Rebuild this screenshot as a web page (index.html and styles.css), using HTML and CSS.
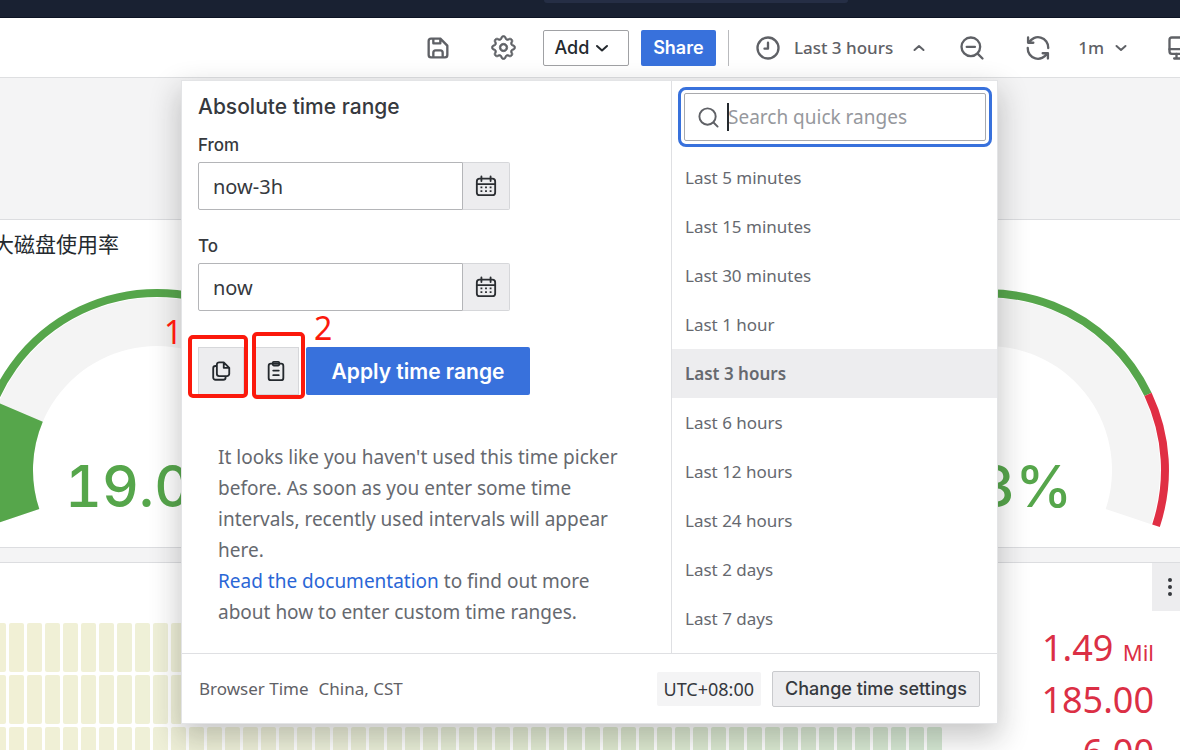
FILE: index.html
```html
<!DOCTYPE html>
<html lang="en">
<head>
<meta charset="utf-8">
<title>Dashboard time range</title>
<link rel="stylesheet" href="styles.css">
</head>
<body>
<header class="topbar"><div class="topbar-search"></div></header>

<nav class="toolbar">
  <button class="icon-btn" aria-label="Save dashboard">
    <svg class="icon" viewBox="0 0 24 24"><path fill="currentColor" d="M20.71,9.29l-6-6a1,1,0,0,0-.32-.21A1.09,1.09,0,0,0,14,3H6A3,3,0,0,0,3,6V18a3,3,0,0,0,3,3H18a3,3,0,0,0,3-3V10A1,1,0,0,0,20.71,9.29ZM9,5h4V7H9Zm6,14H9V16a1,1,0,0,1,1-1h4a1,1,0,0,1,1,1Zm4-1a1,1,0,0,1-1,1H17V16a3,3,0,0,0-3-3H10a3,3,0,0,0-3,3v3H6a1,1,0,0,1-1-1V6A1,1,0,0,1,6,5H7V8A1,1,0,0,0,8,9h6a1,1,0,0,0,1-1V6.41l4,4Z"/></svg>
  </button>
  <button class="icon-btn settings" aria-label="Settings">
    <svg class="icon gear" viewBox="-1 -1 18 18"><g fill="currentColor" stroke="currentColor" stroke-width=".5"><path d="M8 5.2a2.8 2.8 0 1 0 0 5.6 2.8 2.8 0 0 0 0-5.6zM6.3 8a1.7 1.7 0 1 1 3.4 0 1.7 1.7 0 0 1-3.400 0z"/><path d="M9.796 1.343c-.527-1.79-3.065-1.79-3.592 0l-.094.319a.873.873 0 0 1-1.255.52l-.292-.16c-1.64-.892-3.433.902-2.54 2.541l.159.292a.873.873 0 0 1-.52 1.255l-.319.094c-1.79.527-1.79 3.065 0 3.592l.319.094a.873.873 0 0 1 .52 1.255l-.16.292c-.892 1.64.901 3.434 2.541 2.54l.292-.159a.873.873 0 0 1 1.255.52l.094.319c.527 1.79 3.065 1.79 3.592 0l.094-.319a.873.873 0 0 1 1.255-.52l.292.16c1.64.893 3.434-.902 2.54-2.541l-.159-.292a.873.873 0 0 1 .52-1.255l.319-.094c1.79-.527 1.79-3.065 0-3.592l-.319-.094a.873.873 0 0 1-.52-1.255l.16-.292c.893-1.64-.902-3.433-2.541-2.54l-.292.159a.873.873 0 0 1-1.255-.52l-.094-.319zm-2.633.283c.246-.835 1.428-.835 1.674 0l.094.319a1.873 1.873 0 0 0 2.693 1.115l.291-.16c.764-.415 1.6.42 1.184 1.185l-.159.292a1.873 1.873 0 0 0 1.116 2.692l.318.094c.835.246.835 1.428 0 1.674l-.319.094a1.873 1.873 0 0 0-1.115 2.693l.16.291c.415.764-.42 1.6-1.185 1.184l-.291-.159a1.873 1.873 0 0 0-2.693 1.116l-.094.318c-.246.835-1.428.835-1.674 0l-.094-.319a1.873 1.873 0 0 0-2.692-1.115l-.292.16c-.764.415-1.6-.42-1.184-1.185l.159-.291A1.873 1.873 0 0 0 1.945 8.93l-.319-.094c-.835-.246-.835-1.428 0-1.674l.319-.094A1.873 1.873 0 0 0 3.06 4.377l-.16-.292c-.415-.764.42-1.6 1.185-1.184l.292.159a1.873 1.873 0 0 0 2.692-1.115l.094-.319z"/></g></svg>
  </button>
  <button class="btn add">Add
    <svg class="add-chevron" viewBox="0 0 14 14"><path class="line" d="M2 5l5 4.500L12 5"/></svg>
  </button>
  <button class="btn share">Share</button>
  <span class="divider"></span>
  <button class="time-btn">
    <svg class="icon" viewBox="0 0 24 24"><circle class="line" cx="12" cy="12" r="9"/><path class="line" d="M12 7.500v5H9"/></svg>
    <span>Last 3 hours</span>
    <svg class="chevron" viewBox="0 0 24 24"><path class="line" d="M7.500 14l4.500-4 4.500 4"/></svg>
  </button>
  <button class="icon-btn zoom-out" aria-label="Zoom out">
    <svg class="icon" viewBox="0 0 24 24"><circle class="line" cx="11" cy="11" r="8"/><path class="line" d="M17 17l4 4M7.500 11h7"/></svg>
  </button>
  <button class="icon-btn refresh" aria-label="Refresh">
    <svg class="icon" viewBox="0 0 24 24"><path class="line" d="M3.500 3V7.500H8M4.200 7.500A8.800 8.800 0 0 1 20.800 12M20.500 21V16.500H16M19.800 16.500A8.800 8.800 0 0 1 3.200 12"/></svg>
  </button>
  <button class="interval">1m
    <svg class="chevron" viewBox="0 0 24 24"><path class="line" d="M7.500 10l4.500 4 4.500-4"/></svg>
  </button>
  <button class="icon-btn kiosk" aria-label="Kiosk mode">
    <svg class="icon" viewBox="0 0 24 24"><rect class="line" x="3" y="3" width="18" height="14" rx="2"/><path class="line" d="M3 13h18M9 17v4M7 21h10"/></svg>
  </button>

  <section class="picker">
    <div class="picker-body">
      <form class="absolute-range">
        <h2>Absolute time range</h2>
        <label for="from">From</label>
        <div class="field">
          <input id="from" type="text" value="now-3h">
          <button type="button" aria-label="Open calendar for start"><svg class="calendar" viewBox="0 0 24 24"><use href="#cal"/></svg></button>
        </div>
        <label for="to">To</label>
        <div class="field">
          <input id="to" type="text" value="now">
          <button type="button" aria-label="Open calendar for end"><svg class="calendar" viewBox="0 0 24 24"><use href="#cal"/></svg></button>
        </div>
        <div class="actions">
          <button type="button" class="square" aria-label="Copy time range"><svg class="small-icon" viewBox="0 0 24 24"><path class="line" d="M15 2.500H10a2.500 2.500 0 0 0-2.500 2.500v10A2.500 2.500 0 0 0 10 17.500h8.500A2.500 2.500 0 0 0 21 15V8.500zM15 2.500V8.500H21M7.500 6.500H6A2.500 2.500 0 0 0 3.500 9v10A2.500 2.500 0 0 0 6 21.500h8.500A2.500 2.500 0 0 0 17 19v-1.500"/></svg></button>
          <button type="button" class="square paste" aria-label="Paste time range"><svg class="small-icon" viewBox="0 0 24 24"><rect class="line" x="4" y="4" width="16" height="18" rx="2.500"/><rect class="line" x="8.500" y="2" width="7" height="4" rx="1"/><path class="line" d="M9 11.500h6M9 16.500h6"/></svg></button>
          <button type="button" class="apply">Apply time range</button>
          <span class="mark mark-copy"></span>
          <span class="mark mark-paste"></span>
          <span class="mark-label label-one">1</span>
          <span class="mark-label label-two">2</span>
        </div>
        <div class="hint">
          <p>It looks like you haven't used this time picker before. As soon as you enter some time intervals, recently used intervals will appear here.</p>
          <p><a href="#">Read the documentation</a> to find out more about how to enter custom time ranges.</p>
        </div>
      </form>
      <div class="quick">
        <div class="search">
          <svg class="search-icon" viewBox="0 0 24 24"><circle class="line" cx="11" cy="11" r="8.500"/><path class="line" d="M17.500 17.500l4 4"/></svg>
          <input type="text" placeholder="Search quick ranges" aria-label="Search quick ranges">
          <span class="caret"></span>
        </div>
        <ul>
          <li><button>Last 5 minutes</button></li>
          <li><button>Last 15 minutes</button></li>
          <li><button>Last 30 minutes</button></li>
          <li><button>Last 1 hour</button></li>
          <li><button class="selected">Last 3 hours</button></li>
          <li><button>Last 6 hours</button></li>
          <li><button>Last 12 hours</button></li>
          <li><button>Last 24 hours</button></li>
          <li><button>Last 2 days</button></li>
          <li><button>Last 7 days</button></li>
        </ul>
      </div>
    </div>
    <footer class="picker-foot">
      <span>Browser Time</span>
      <span class="zone">China, CST</span>
      <span class="offset">UTC+08:00</span>
      <button>Change time settings</button>
    </footer>
  </section>
</nav>

<main class="dashboard">
  <section class="panel gauges">
    <h3>大磁盘使用率</h3>
    <div class="gauge-row">
      <svg class="gauge" viewBox="-182 -182 364 240">
        <path d="M-117.700 39.100A124 124 0 1 1 117.700 39.100L163.200 54.200A172 172 0 1 0 -163.200 54.200Z" fill="#f4f4f4"/>
        <path d="M-117.700 39.100A124 124 0 0 1 -114.200 -48.300L-158.400 -67A172 172 0 0 0 -163.200 54.200Z" fill="#56a64b"/>
        <path d="M-168 55.700A177 177 0 1 1 168 55.700" fill="none" stroke="#56a64b" stroke-width="8"/>
        <text x="-92" y="37" class="gauge-value">19.0%</text>
      </svg>
      <svg class="gauge" viewBox="-182 -182 364 240">
        <path d="M-117.700 39.100A124 124 0 1 1 117.700 39.100L163.200 54.200A172 172 0 1 0 -163.200 54.200Z" fill="#f4f4f4"/>
        <path d="M-168 55.700A177 177 0 0 1 160 -75.600" fill="none" stroke="#56a64b" stroke-width="8"/>
        <path d="M160 -75.600A177 177 0 0 1 168 55.700" fill="none" stroke="#e02f44" stroke-width="8"/>
        <text x="84" y="37" class="gauge-value end">3%</text>
      </svg>
    </div>
  </section>
  <section class="panel bars">
    <button class="panel-menu" aria-label="Panel menu"><svg viewBox="0 0 6 20"><circle cx="3" cy="3" r="2"/><circle cx="3" cy="10" r="2"/><circle cx="3" cy="17" r="2"/></svg></button>
    <div class="bar"><div class="cells"></div><div class="value">1.49 <small>Mil</small></div></div>
    <div class="bar"><div class="cells"></div><div class="value">185.00</div></div>
    <div class="bar"><div class="cells"></div><div class="value">6.00</div></div>
  </section>
</main>

<svg class="defs" aria-hidden="true"><defs>
  <g id="cal"><rect class="line" x="2" y="4" width="20" height="18" rx="3"/><path class="line" d="M2 10h20M7 1.500v5M17 1.500v5"/><path class="dots" d="M6 13.500h2M11 13.500h2M16 13.500h2M6 17.500h2M11 17.500h2M16 17.500h2"/></g>
</defs></svg>
<script src="script.js"></script>
</body>
</html>
```
FILE: styles.css
```css
* { box-sizing: border-box; }
body {
  margin: 0;
  height: 100vh;
  overflow: hidden;
  display: flex;
  flex-direction: column;
  background: #f4f4f5;
  color: #24292e;
  font-family: "Noto Sans", "Noto Sans CJK SC", sans-serif;
  font-size: 17px;
}
button, input { font: inherit; color: inherit; margin: 0; }
button { border: 0; background: none; padding: 0; cursor: pointer; }
h2, h3, p, ul { margin: 0; padding: 0; }
.line { fill: none; stroke: currentColor; stroke-width: 2; stroke-linecap: round; stroke-linejoin: round; }
.dots { fill: none; stroke: currentColor; stroke-width: 2; }
.defs { position: absolute; width: 0; height: 0; }

.topbar { flex: none; height: 18px; background: #192132; border-bottom: 1px solid #0d1424; }
.topbar-search { width: 304px; height: 3px; margin-left: 544px; background: #252e45; border-radius: 0 0 3px 3px; }

.toolbar {
  flex: none;
  position: relative;
  z-index: 1;
  height: 60px;
  display: flex;
  align-items: center;
  justify-content: flex-end;
  background: #fff;
  border-bottom: 1px solid #dedfe1;
  color: #5f6166;
}
.icon { display: block; width: 28px; height: 28px; flex: none; }
.gear { width: 27px; height: 27px; }
.settings { margin-left: 38px; }
.btn { height: 36px; border-radius: 2px; font: 500 18px Inter, sans-serif; }
.add {
  width: 86px;
  margin-left: 26px;
  padding-right: 8px;
  display: flex;
  align-items: center;
  justify-content: center;
  gap: 6px;
  border: 1px solid #a0a1a4;
  color: #24292e;
}
.add-chevron { width: 14px; height: 14px; }
.share { width: 75px; margin-left: 12px; background: #3871dc; color: #fff; font-weight: 600; }
.divider { width: 1px; height: 36px; margin: 0 25px 0 12px; background: #b9babd; }
.time-btn { display: flex; align-items: center; font-weight: 500; }
.time-btn span { margin: 0 14px 0 12px; }
.chevron { width: 24px; height: 24px; flex: none; }
.zoom-out { margin-left: 27px; }
.refresh { margin-left: 38px; }
.interval { display: flex; align-items: center; gap: 5px; margin-left: 26px; font-weight: 500; }
.kiosk { margin-left: 33px; margin-right: -14px; }

.picker {
  position: absolute;
  top: 62px;
  right: 182px;
  width: 817px;
  background: #fff;
  border: 1px solid #e3e4e6;
  box-shadow: 0 12px 28px 2px rgba(24, 26, 27, .24);
}
.picker-body { display: flex; height: 573px; border-bottom: 1px solid #dfe0e3; }
.absolute-range { flex: 1; padding: 14px 16px 0; display: flex; flex-direction: column; color: #36393e; }
.absolute-range h2 { font: 500 21px/24px Inter, sans-serif; }
.absolute-range label { margin-top: 14px; font: 500 17px/24px Inter, sans-serif; }
.field { display: flex; width: 312px; height: 48px; margin-top: 5px; }
.field + label { margin-top: 24px; }
.field input {
  flex: 1;
  min-width: 0;
  padding: 0 14px;
  border: 1px solid #b4b5b8;
  border-radius: 2px 0 0 2px;
  font-size: 20px;
}
.field button {
  width: 47px;
  display: grid;
  place-items: center;
  background: #ededef;
  border: 1px solid #d6d7da;
  border-left: 0;
  border-radius: 0 2px 2px 0;
  color: #2b2e32;
}
.calendar { width: 22px; height: 22px; }
.actions { position: relative; display: flex; margin-top: 36px; height: 48px; }
.square {
  width: 46px;
  display: grid;
  place-items: center;
  background: #ededef;
  border: 1px solid #d6d7da;
  color: #24292e;
}
.small-icon { width: 22px; height: 22px; }
.paste { margin-left: 9px; }
.apply {
  width: 224px;
  margin-left: 7px;
  background: #3871dc;
  border-radius: 2px;
  color: #fff;
  font: 600 21px Inter, sans-serif;
}
.mark { position: absolute; border: 4px solid #fb190c; border-radius: 5px; }
.mark-copy { left: -10px; top: -12px; width: 60px; height: 63px; }
.mark-paste { left: 54px; top: -15px; width: 53px; height: 67px; }
.mark-label { position: absolute; color: #fb190c; font-size: 32px; line-height: 36px; }
.label-one { left: -34px; top: -33px; }
.label-two { left: 116px; top: -37px; }
.hint { padding: 47px 0 0 20px; width: 424px; font-size: 19px; line-height: 31px; color: #66696f; }
.hint a { color: #2a66d6; text-decoration: none; }

.quick { width: 326px; border-left: 1px solid #dfe0e3; }
.search {
  position: relative;
  display: flex;
  align-items: center;
  height: 48px;
  margin: 12px 11px 12px 12px;
  border: 1px solid #a9aaad;
  border-radius: 2px;
  outline: 3px solid #3871dc;
  outline-offset: 3px;
  color: #5f6166;
}
.search-icon { width: 23px; height: 23px; margin: 0 8px 0 12px; flex: none; }
.search input { flex: 1; min-width: 0; border: 0; outline: 0; padding: 0; background: none; font-size: 19px; }
.search input::placeholder { color: #96989d; }
.caret { position: absolute; left: 42px; top: 9px; width: 2px; height: 28px; background: #24292e; }
.quick ul { list-style: none; }
.quick li button { display: block; width: 100%; height: 49px; padding: 0 13px; text-align: left; color: #66696f; }
.quick .selected { background: #ededef; font-weight: 600; }

.picker-foot { display: flex; align-items: center; height: 69px; padding: 0 17px; color: #5f6166; }
.zone { margin-left: 10px; }
.offset { margin-left: auto; padding: 0 7px; height: 34px; line-height: 34px; background: #f4f4f5; border-radius: 2px; font-size: 18px; color: #36393e; }
.picker-foot button {
  width: 208px;
  height: 36px;
  margin-left: 11px;
  background: #ededef;
  border: 1px solid #c9cacd;
  border-radius: 2px;
  color: #36393e;
  font: 500 18px Inter, sans-serif;
}

.dashboard { flex: 1; min-height: 0; padding-top: 141px; display: flex; flex-direction: column; gap: 14px; }
.panel { background: #fff; border-top: 1px solid #dcdde0; flex: none; }
.gauges { height: 329px; border-bottom: 1px solid #dcdde0; overflow: hidden; }
.gauges h3 { margin: 8px 0 0 -7px; font: 400 21px/30px "Noto Sans CJK SC", sans-serif; }
.gauge-row { display: flex; justify-content: space-between; margin: 30px 10px 0 -25px; }
.gauge { width: 364px; height: 240px; flex: none; }
.gauge-value { font: 500 57px Inter, sans-serif; font-variant-numeric: tabular-nums; fill: #56a64b; }
.end { text-anchor: end; }

.bars { display: flex; flex-direction: column; gap: 3px; padding-right: 26px; }
.panel-menu { align-self: flex-end; width: 28px; height: 48px; margin: 0 -26px 9px 0; display: grid; place-items: center; background: #ededef; }
.panel-menu svg { width: 6px; height: 20px; fill: #36393e; margin-left: 8px; }
.bar { display: flex; height: 49px; margin-left: -9px; }
.cells { flex: 1; display: flex; gap: 3px; }
.cells i { flex: 1; border-radius: 2px; }
.value { width: 212px; text-align: right; font-size: 36px; line-height: 50px; color: #db2f45; white-space: nowrap; }
.value small { font-size: 22px; }
```
FILE: script.js
```js
const stops = [[241, 240, 213], [237, 240, 218], [222, 233, 208], [213, 232, 211]];
const count = 53;
document.querySelectorAll('.cells').forEach(row => {
  for (let i = 0; i < count; i++) {
    const t = i / (count - 1) * (stops.length - 1);
    const k = Math.min(Math.floor(t), stops.length - 2);
    const rgb = stops[k].map((c, j) => Math.round(c + (stops[k + 1][j] - c) * (t - k)));
    const cell = document.createElement('i');
    cell.style.background = `rgb(${rgb})`;
    row.append(cell);
  }
});
```
